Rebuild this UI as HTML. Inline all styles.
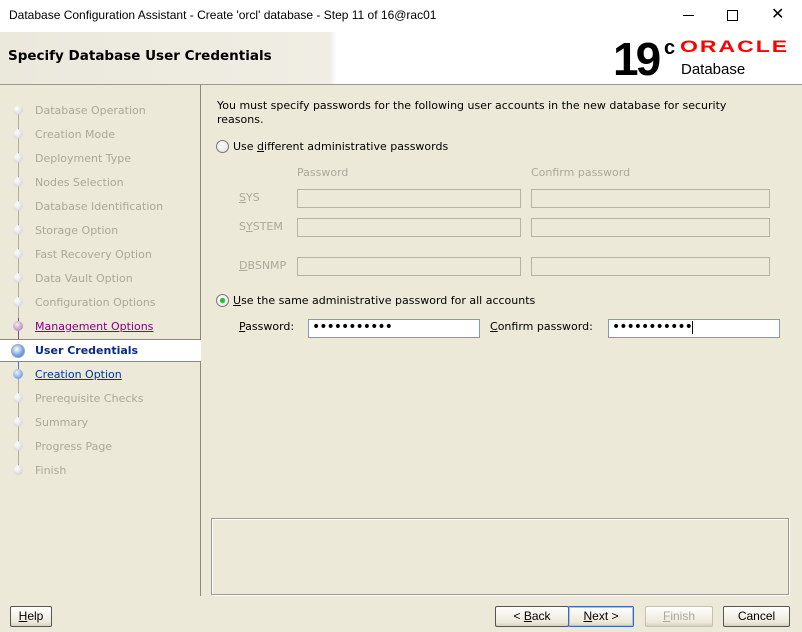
<!DOCTYPE html>
<html><head><meta charset="utf-8"><style>
*{margin:0;padding:0;box-sizing:border-box}
body{width:802px;height:632px;background:#ece9d8;font-family:"DejaVu Sans","Liberation Sans",sans-serif;font-size:11px;color:#000;position:relative;overflow:hidden}
.a{position:absolute;white-space:nowrap}
.tb{left:0;top:0;width:802px;height:32px;background:#fff;font-family:"Liberation Sans",sans-serif;font-size:12px}
.hd{left:0;top:32px;width:802px;height:53px;background:linear-gradient(90deg,#ebe8dc 0,#f0eee4 330px,#fff 337px);border-bottom:1px solid #9c9a90}
.lp{left:0;top:85px;width:201px;height:511px;border-right:1px solid #8a8980}
.it{left:35px;color:#aca899}
.dot{left:13px;width:10px;height:10px;border-radius:50%;background:radial-gradient(circle at 40% 35%,#fff,#d8d8d8 70%,#aaa);}
.ln{left:18px;width:1px;background:#aaa}
.in{position:absolute;height:19px;border:1px solid #b6b3a4;background:#ece9d8}
.pw{position:absolute;height:19px;border:1px solid #7f9db9;background:#fff;font-size:14px;line-height:15px;padding-left:3px;letter-spacing:-1px}
.dis{color:#aca899}
.btn{position:absolute;top:606px;height:21px;border:1px solid #555;border-radius:2px;background:linear-gradient(#fff,#ece9d8 80%,#d6d2c2);font-size:12px;text-align:center;line-height:19px;font-family:"Liberation Sans",sans-serif}
u{text-decoration:underline}
</style></head><body>
<div class="a tb"><span class="a" style="left:9px;top:8px">Database Configuration Assistant - Create 'orcl' database - Step 11 of 16@rac01</span>
<span class="a" style="left:683px;top:15px;width:11px;height:1px;background:#000"></span>
<span class="a" style="left:727px;top:10px;width:11px;height:11px;border:1px solid #000"></span>
<span class="a" style="left:771px;top:4px;font-size:16px">✕</span></div>
<div class="a hd"><span class="a" style="left:8px;top:16px;font-size:13.5px;font-weight:bold">Specify Database User Credentials</span>
<span class="a" style="left:613px;top:3px;font-family:'Liberation Sans',sans-serif;font-size:46px;font-weight:bold;letter-spacing:-3px;line-height:48px">19</span>
<span class="a" style="left:664px;top:5px;font-family:'Liberation Sans',sans-serif;font-size:20px;font-weight:bold">c</span>
<span class="a" style="left:680px;top:5px;font-family:'Liberation Sans',sans-serif;font-size:23px;font-weight:bold;color:#f00;letter-spacing:2px;transform:scaleY(0.72);transform-origin:top left">ORACLE</span>
<span class="a" style="left:681px;top:29px;font-family:'Liberation Sans',sans-serif;font-size:15px">Database</span></div>
<div class="a lp"></div>
<div class="a ln" style="top:110px;height:230px;background:#aaa"></div>
<div class="a ln" style="top:318px;height:32px;background:#7a4a8a"></div>
<div class="a ln" style="top:350px;height:25px;background:#4a7ac8"></div>
<div class="a ln" style="top:375px;height:95px"></div>
<div class="a" style="left:0;top:339px;width:201px;height:23px;background:#fff;border-top:1px solid #8a8980;border-bottom:1px solid #8a8980"></div>

<div class="a dot" style="top:105px"></div><span class="a it" style="top:104px">Database Operation</span>
<div class="a dot" style="top:129px"></div><span class="a it" style="top:128px">Creation Mode</span>
<div class="a dot" style="top:153px"></div><span class="a it" style="top:152px">Deployment Type</span>
<div class="a dot" style="top:177px"></div><span class="a it" style="top:176px">Nodes Selection</span>
<div class="a dot" style="top:201px"></div><span class="a it" style="top:200px">Database Identification</span>
<div class="a dot" style="top:225px"></div><span class="a it" style="top:224px">Storage Option</span>
<div class="a dot" style="top:249px"></div><span class="a it" style="top:248px">Fast Recovery Option</span>
<div class="a dot" style="top:273px"></div><span class="a it" style="top:272px">Data Vault Option</span>
<div class="a dot" style="top:297px"></div><span class="a it" style="top:296px">Configuration Options</span>
<div class="a dot" style="top:321px;background:radial-gradient(circle at 40% 35%,#f4e8f4,#a070a8)"></div><span class="a it" style="top:320px;color:#800080;text-decoration:underline">Management Options</span>
<div class="a dot" style="top:344px;left:11px;width:14px;height:14px;background:radial-gradient(circle at 40% 35%,#fff,#7aa8e8 55%,#3a6ac0);border:1px solid #9ab"></div><span class="a it" style="top:344px;color:#0a2a80;font-weight:bold">User Credentials</span>
<div class="a dot" style="top:369px;background:radial-gradient(circle at 40% 35%,#e8f0ff,#4a80d8)"></div><span class="a it" style="top:368px;color:#0033a0;text-decoration:underline">Creation Option</span>
<div class="a dot" style="top:393px"></div><span class="a it" style="top:392px">Prerequisite Checks</span>
<div class="a dot" style="top:417px"></div><span class="a it" style="top:416px">Summary</span>
<div class="a dot" style="top:441px"></div><span class="a it" style="top:440px">Progress Page</span>
<div class="a dot" style="top:465px"></div><span class="a it" style="top:464px">Finish</span>

<span class="a" style="left:217px;top:99px">You must specify passwords for the following user accounts in the new database for security</span>
<span class="a" style="left:217px;top:113px">reasons.</span>
<div class="a" style="left:216px;top:140px;width:13px;height:13px;border-radius:50%;border:1px solid #777;background:radial-gradient(circle at 40% 35%,#fff,#ddd)"></div>
<span class="a" style="left:233px;top:140px">Use <u>d</u>ifferent administrative passwords</span>
<span class="a dis" style="left:297px;top:166px">Password</span>
<span class="a dis" style="left:531px;top:166px">Confirm password</span>
<span class="a dis" style="left:239px;top:191px"><u>S</u>YS</span>
<span class="a dis" style="left:239px;top:220px">S<u>Y</u>STEM</span>
<span class="a dis" style="left:239px;top:259px"><u>D</u>BSNMP</span>
<div class="in" style="left:297px;top:189px;width:224px"></div><div class="in" style="left:531px;top:189px;width:239px"></div>
<div class="in" style="left:297px;top:218px;width:224px"></div><div class="in" style="left:531px;top:218px;width:239px"></div>
<div class="in" style="left:297px;top:257px;width:224px"></div><div class="in" style="left:531px;top:257px;width:239px"></div>
<div class="a" style="left:216px;top:294px;width:13px;height:13px;border-radius:50%;border:1px solid #777;background:radial-gradient(circle,#2a2 0,#4c4 2.5px,#fff 3px,#ddd)"></div>
<span class="a" style="left:233px;top:294px"><u>U</u>se the same administrative password for all accounts</span>
<span class="a" style="left:239px;top:320px"><u>P</u>assword:</span>
<div class="pw" style="left:308px;top:319px;width:172px">•••••••••••</div>
<span class="a" style="left:490px;top:320px"><u>C</u>onfirm password:</span>
<div class="pw" style="left:608px;top:319px;width:172px">•••••••••••<span style="display:inline-block;width:1px;height:13px;background:#000;vertical-align:middle"></span></div>
<div class="a" style="left:211px;top:518px;width:578px;height:77px;border:1px solid #999;box-shadow:inset 1px 1px 0 #fff,1px 1px 0 #fff"></div>
<div class="btn" style="left:10px;width:42px"><u>H</u>elp</div>
<div class="btn" style="left:495px;width:74px">&lt; <u>B</u>ack</div>
<div class="btn" style="left:568px;width:66px;border-color:#3c6ab8;box-shadow:inset 0 0 0 1px #a8c0f0"><u>N</u>ext &gt;</div>
<div class="btn" style="left:645px;width:68px;color:#aca899;border-color:#c4c1b4"><u>F</u>inish</div>
<div class="btn" style="left:723px;width:67px">Cancel</div>
</body></html>
